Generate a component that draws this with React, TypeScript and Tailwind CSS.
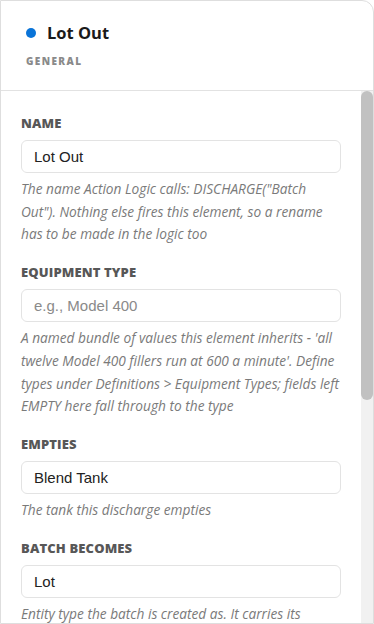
import React from "react";

type Field = {
  label: string;
  value?: string;
  placeholder?: string;
  help: string;
};

const fields: Field[] = [
  {
    label: "Name",
    value: "Lot Out",
    help: 'The name Action Logic calls: DISCHARGE("Batch Out"). Nothing else fires this element, so a rename has to be made in the logic too',
  },
  {
    label: "Equipment Type",
    placeholder: "e.g., Model 400",
    help: "A named bundle of values this element inherits - 'all twelve Model 400 fillers run at 600 a minute'. Define types under Definitions > Equipment Types; fields left EMPTY here fall through to the type",
  },
  {
    label: "Empties",
    value: "Blend Tank",
    help: "The tank this discharge empties",
  },
  {
    label: "Batch Becomes",
    value: "Lot",
    help: "Entity type the batch is created as. It carries its attributes and the tank's lot number with it",
  },
  {
    label: "Quantity",
    value: "All",
    help: "How much of the tank leaves as one batch. ALL drains it to the heel",
  },
];

function FieldRow({ field }: { field: Field }) {
  return (
    <div className="flex flex-col">
      <label className="text-[13px] leading-4 font-extrabold uppercase tracking-[0.01em] text-[#575757] mb-[9px]">
        {field.label}
      </label>
      <input
        defaultValue={field.value}
        placeholder={field.placeholder}
        className="h-[33px] w-full rounded-md border border-[#e3e3e3] bg-white px-3 text-[15px] text-[#222] placeholder:text-[#8a8a8a] outline-none font-['Liberation_Sans',Arial,sans-serif]"
      />
      <p className="mt-[5px] text-[13.7px] leading-[22.7px] italic text-[#7a7a7a]">
        {field.help}
      </p>
    </div>
  );
}

export default function App() {
  return (
    <div className="h-[624px] w-[374px] bg-white font-['Open_Sans',sans-serif]">
      <div className="flex h-full flex-col border border-[#dedede] rounded-tr-xl overflow-hidden">
        {/* Header */}
        <div className="h-[90px] shrink-0 border-b border-[#e2e2e2] pl-[25px] pt-5">
          <div className="flex h-6 items-center gap-[11px]">
            <span className="h-[10px] w-[10px] rounded-full bg-[#0a74d8]" />
            <h1 className="text-[16.5px] font-bold text-[#1a1a1a] leading-6">Lot Out</h1>
          </div>
          <div className="mt-[9px] text-[10px] leading-[14px] font-extrabold uppercase tracking-[0.14em] text-[#8a8a8a]">
            General
          </div>
        </div>

        {/* Body with its scroll track */}
        <div className="flex min-h-0 flex-1">
          <div className="min-w-0 flex-1 overflow-hidden">
            <div className="flex flex-col gap-[18px] px-5 pt-6 pb-8">
              {fields.map((f) => (
                <FieldRow key={f.label} field={f} />
              ))}
            </div>
          </div>
          <div className="w-3 shrink-0 bg-[#f1f1f1]">
            <div className="h-[309px] w-full rounded-full bg-[#c1c1c1]" />
          </div>
        </div>
      </div>
    </div>
  );
}
